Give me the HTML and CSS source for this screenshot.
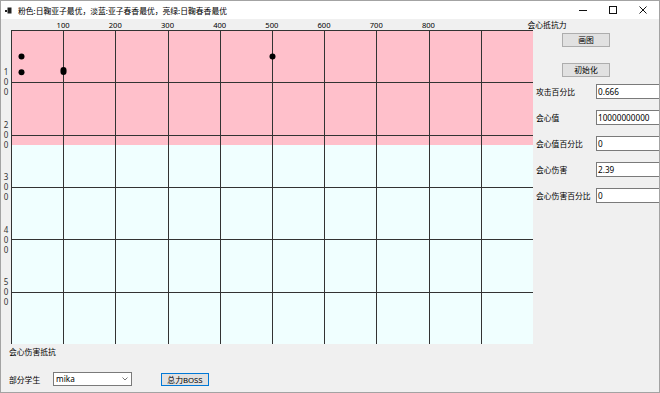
FILE: index.html
```html
<!DOCTYPE html>
<html lang="zh-CN">
<head>
<meta charset="utf-8">
<title>会心抵抗</title>
<link rel="stylesheet" href="styles.css">
</head>
<body>
<div class="window">
  <div class="titlebar">
    <svg class="appicon" width="7" height="7" viewBox="0 0 7 7">
      <rect x="0" y="3" width="2" height="2" fill="#222"/>
      <rect x="2.5" y="0.5" width="4" height="6" fill="#222"/>
    </svg>
    <span class="title">粉色:日鞠亚子最优，淡蓝:亚子春香最优，亮绿:日鞠春香最优</span>
    <div class="controls">
      <span class="ctl"><svg width="10" height="10" viewBox="0 0 10 10"><line x1="1" y1="5.5" x2="9" y2="5.5" stroke="#111" stroke-width="1"/></svg></span>
      <span class="ctl"><svg width="10" height="10" viewBox="0 0 10 10"><rect x="1.5" y="1.5" width="7" height="7" fill="none" stroke="#111" stroke-width="1"/></svg></span>
      <span class="ctl"><svg width="10" height="10" viewBox="0 0 10 10"><path d="M1.5 1.5 L8.5 8.5 M8.5 1.5 L1.5 8.5" stroke="#111" stroke-width="1"/></svg></span>
    </div>
  </div>
  <div class="client">
    <div class="xaxis">
      <span class="xtick">100</span>
      <span class="xtick">200</span>
      <span class="xtick">300</span>
      <span class="xtick">400</span>
      <span class="xtick">500</span>
      <span class="xtick">600</span>
      <span class="xtick">700</span>
      <span class="xtick">800</span>
      <span class="xtitle">会心抵抗力</span>
    </div>
    <div class="main">
      <div class="plotrow">
        <div class="yaxis">
          <span class="ytick">1<br>0<br>0</span>
          <span class="ytick">2<br>0<br>0</span>
          <span class="ytick">3<br>0<br>0</span>
          <span class="ytick">4<br>0<br>0</span>
          <span class="ytick">5<br>0<br>0</span>
        </div>
        <svg class="plot" width="522" height="314" viewBox="0 0 522 314" shape-rendering="crispEdges">
          <rect x="0" y="0" width="522" height="115" fill="#FFC0CB"/>
          <rect x="0" y="115" width="522" height="199" fill="#F0FFFF"/>
          <g stroke="#333" stroke-width="1">
            <line x1="0.5" y1="0" x2="0.5" y2="314"/>
            <line x1="52.5" y1="0" x2="52.5" y2="314"/>
            <line x1="104.5" y1="0" x2="104.5" y2="314"/>
            <line x1="157.5" y1="0" x2="157.5" y2="314"/>
            <line x1="209.5" y1="0" x2="209.5" y2="314"/>
            <line x1="261.5" y1="0" x2="261.5" y2="314"/>
            <line x1="313.5" y1="0" x2="313.5" y2="314"/>
            <line x1="365.5" y1="0" x2="365.5" y2="314"/>
            <line x1="418.5" y1="0" x2="418.5" y2="314"/>
            <line x1="470.5" y1="0" x2="470.5" y2="314"/>
            <line x1="0" y1="0.5" x2="522" y2="0.5"/>
            <line x1="0" y1="52.5" x2="522" y2="52.5"/>
            <line x1="0" y1="105.5" x2="522" y2="105.5"/>
            <line x1="0" y1="157.5" x2="522" y2="157.5"/>
            <line x1="0" y1="209.5" x2="522" y2="209.5"/>
            <line x1="0" y1="262.5" x2="522" y2="262.5"/>
          </g>
          <g fill="#000" shape-rendering="auto">
            <circle cx="10.5" cy="26.5" r="3"/>
            <circle cx="10.5" cy="42.3" r="3"/>
            <circle cx="52.5" cy="40" r="3"/>
            <circle cx="52.5" cy="42" r="3"/>
            <circle cx="261.5" cy="26.5" r="3"/>
          </g>
        </svg>
      </div>
      <div class="ytitle">会心伤害抵抗</div>
      <div class="bottom">
        <span class="lbl">部分学生</span>
        <div class="combo">
          <span>mika</span>
          <svg class="chev" width="6" height="4" viewBox="0 0 6 4"><path d="M0.5 0.5 L3 3 L5.5 0.5" fill="none" stroke="#666" stroke-width="0.9"/></svg>
        </div>
        <button class="btn focus">总力BOSS</button>
      </div>
    </div>
    <div class="side">
      <button class="btn sidebtn">画图</button>
      <button class="btn sidebtn second">初始化</button>
      <div class="fields">
        <div class="field"><span class="flabel">攻击百分比</span><div class="tbox">0.666</div></div>
        <div class="field"><span class="flabel">会心值</span><div class="tbox">10000000000</div></div>
        <div class="field"><span class="flabel">会心值百分比</span><div class="tbox">0</div></div>
        <div class="field"><span class="flabel">会心伤害</span><div class="tbox">2.39</div></div>
        <div class="field"><span class="flabel">会心伤害百分比</span><div class="tbox">0</div></div>
      </div>
    </div>
  </div>
</div>
</body>
</html>
```

FILE: styles.css
```css
html, body {
  margin: 0;
  padding: 0;
  background: #ffffff;
}

body {
  font-family: "Noto Sans", "Noto Sans CJK SC", sans-serif;
  font-size: 7.8px;
  color: #000;
}

.window {
  width: 660px;
  height: 393px;
  box-sizing: border-box;
  border: 1px solid #a3a3a3;
  background: #f0f0f0;
  overflow: hidden;
  display: flex;
  flex-direction: column;
}

.titlebar {
  height: 18px;
  flex: none;
  background: #ffffff;
  display: flex;
  align-items: center;
  padding-left: 4px;
  padding-right: 1px;
}

.appicon {
  flex: none;
  margin-top: 1px;
}

.title {
  margin-left: 6px;
  line-height: 10px;
  white-space: nowrap;
  flex: 1;
  margin-top: 1px;
}

.controls {
  display: flex;
  height: 18px;
}

.ctl {
  width: 30px;
  height: 18px;
  display: flex;
  align-items: center;
  justify-content: center;
}

.client {
  flex: 1;
  display: grid;
  grid-template-columns: 534px 1fr;
  grid-template-rows: 11px 1fr;
  min-height: 0;
}

.xaxis {
  grid-column: 1 / 3;
  display: flex;
  align-items: center;
  padding-left: 36px;
  font-size: 7.6px;
  line-height: 10px;
  white-space: nowrap;
}

.xtick {
  width: 52.2px;
  text-align: center;
  flex: none;
}

.xtitle {
  margin-left: 73px;
  font-size: 7.8px;
}

.main {
  display: flex;
  flex-direction: column;
}

.plotrow {
  display: flex;
}

.yaxis {
  width: 10px;
  flex: none;
  display: flex;
  flex-direction: column;
  align-items: center;
  padding-top: 37px;
  gap: 22.5px;
  box-sizing: border-box;
  font-size: 8px;
}

.ytick {
  line-height: 10px;
  text-align: center;
  display: block;
  color: #333;
}

.plot {
  display: block;
  flex: none;
}

.ytitle {
  margin-top: 3px;
  padding-left: 8px;
  line-height: 10px;
}

.bottom {
  margin-top: 15px;
  display: flex;
  align-items: center;
  height: 14px;
  padding-left: 8px;
}

.lbl {
  width: 44px;
  flex: none;
}

.combo {
  width: 79px;
  height: 14px;
  box-sizing: border-box;
  border: 1px solid #7a7a7a;
  background: #fff;
  display: flex;
  align-items: center;
  justify-content: space-between;
  padding: 0 3px 0 2px;
  flex: none;
  font-size: 8.2px;
}

.combo span {
  line-height: 12px;
}

.chev {
  display: block;
}

.btn {
  font-family: inherit;
  font-size: 7.8px;
  color: #000;
  background: #e1e1e1;
  border: 1px solid #adadad;
  box-sizing: border-box;
  width: 48px;
  height: 14px;
  padding: 0;
  line-height: 12px;
  text-align: center;
}

.btn.focus {
  border-color: #0078d7;
  margin-left: 29px;
  height: 13px;
}

.side {
  display: flex;
  flex-direction: column;
  align-items: flex-start;
  padding-left: 1px;
}

.sidebtn {
  margin-left: 26px;
  margin-top: 3px;
}

.sidebtn.second {
  margin-top: 16px;
}

.fields {
  margin-top: 7px;
  display: flex;
  flex-direction: column;
  gap: 10.9px;
  width: 100%;
}

.field {
  display: flex;
  align-items: center;
  height: 15px;
}

.flabel {
  width: 60px;
  flex: none;
  white-space: nowrap;
}

.tbox {
  width: 80px;
  height: 15px;
  flex: none;
  box-sizing: border-box;
  border: 1px solid #7a7a7a;
  background: #fff;
  padding-left: 1px;
  line-height: 13px;
  font-size: 8.2px;
  white-space: nowrap;
}
```
